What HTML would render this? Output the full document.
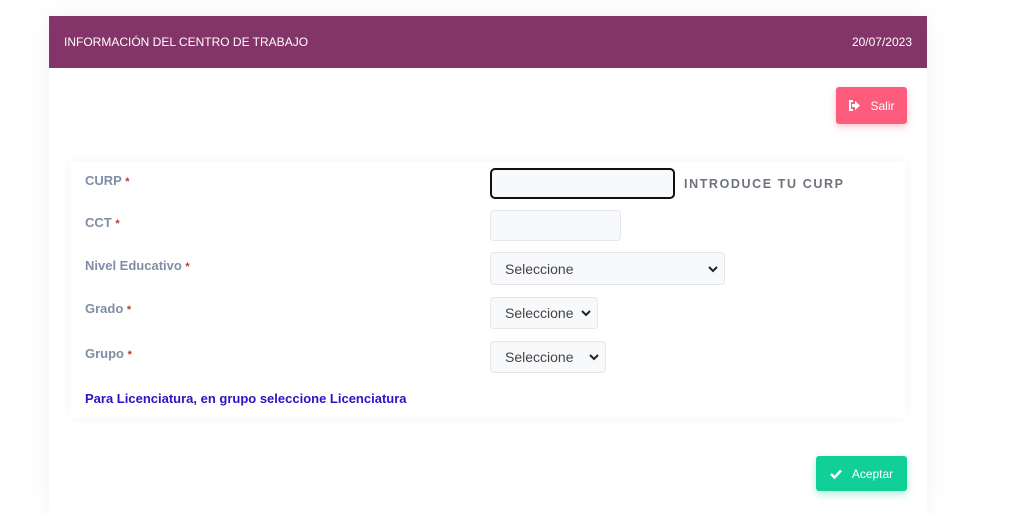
<!DOCTYPE html>
<html><head><meta charset="utf-8"><style>
*{box-sizing:border-box;margin:0;padding:0}
html,body{width:1024px;height:514px;overflow:hidden}
body{background:#fff;font-family:"Liberation Sans",sans-serif;position:relative}
.card{position:absolute;left:49px;top:16px;width:878px;height:498px;background:#fff;box-shadow:0 0 20px rgba(0,0,0,.06)}
.hdr{position:absolute;left:49px;top:16px;width:878px;height:52px;background:#833569;color:#fff;font-size:12px}
.hdr .t{position:absolute;left:15px;top:19px}
.hdr .d{position:absolute;right:15px;top:19px}
.btn{position:absolute;color:#fff;font-size:12px;border-radius:3px;display:flex;align-items:center;justify-content:center;gap:10px}
.salir{left:836px;top:87px;width:71px;height:37px;background:#fe5c7d;box-shadow:0 3px 8px rgba(254,92,125,.35)}
.acep{left:816px;top:456px;width:91px;height:35px;background:#10cf97;box-shadow:0 3px 8px rgba(16,207,151,.35)}
.panel{position:absolute;left:71px;top:162px;width:834px;height:255px;background:#fff;box-shadow:0 0 12px rgba(0,0,0,.05)}
.lbl{position:absolute;left:85px;font-size:13px;font-weight:bold;color:#7f8ea5}
.lbl span{color:#c0392b;font-size:11px}
.in{position:absolute;left:490px;background:#f8f9fb;border:1px solid #e4e6ea;border-radius:4px;font-size:14px;color:#444;padding-left:14px;display:flex;align-items:center}
.in svg{position:absolute;right:6px;top:50%;margin-top:-4px}
</style></head><body>
<div class="card"></div>
<div class="hdr"><div class="t">INFORMACIÓN DEL CENTRO DE TRABAJO</div><div class="d">20/07/2023</div></div>
<div class="btn salir"><svg width="12" height="11" viewBox="0 0 12 11"><path d="M5 1H2v9h3" stroke="#fff" stroke-width="2" fill="none"/><path d="M4 4h3V1l5 4.5L7 10V7H4z" fill="#fff"/></svg>Salir</div>
<div class="panel"></div>
<div class="lbl" style="top:173px">CURP <span>*</span></div>
<div class="lbl" style="top:215px">CCT <span>*</span></div>
<div class="lbl" style="top:258px">Nivel Educativo <span>*</span></div>
<div class="lbl" style="top:301px">Grado <span>*</span></div>
<div class="lbl" style="top:346px">Grupo <span>*</span></div>
<div class="in" style="top:168px;width:185px;height:31px;border:2px solid #111;border-radius:5px"></div>
<div style="position:absolute;left:684px;top:177px;font-size:12.5px;font-weight:bold;letter-spacing:1.6px;color:#6c737b">INTRODUCE TU CURP</div>
<div class="in" style="top:210px;width:131px;height:31px"></div>
<div class="in" style="top:252px;width:235px;height:33px">Seleccione<svg width="10" height="8" viewBox="0 0 10 8"><path d="M1 2l4 4 4-4" stroke="#222" stroke-width="2" fill="none"/></svg></div>
<div class="in" style="top:297px;width:108px;height:32px">Seleccione<svg width="10" height="8" viewBox="0 0 10 8"><path d="M1 2l4 4 4-4" stroke="#222" stroke-width="2" fill="none"/></svg></div>
<div class="in" style="top:341px;width:116px;height:32px">Seleccione<svg width="10" height="8" viewBox="0 0 10 8"><path d="M1 2l4 4 4-4" stroke="#222" stroke-width="2" fill="none"/></svg></div>
<div style="position:absolute;left:85px;top:391px;font-size:13px;font-weight:bold;color:#2a14c4">Para Licenciatura, en grupo seleccione Licenciatura</div>
<div class="btn acep"><svg width="12" height="10" viewBox="0 0 12 10"><path d="M1 5l3.5 3.5L11 1.5" stroke="#fff" stroke-width="2.4" fill="none"/></svg>Aceptar</div>
</body></html>
